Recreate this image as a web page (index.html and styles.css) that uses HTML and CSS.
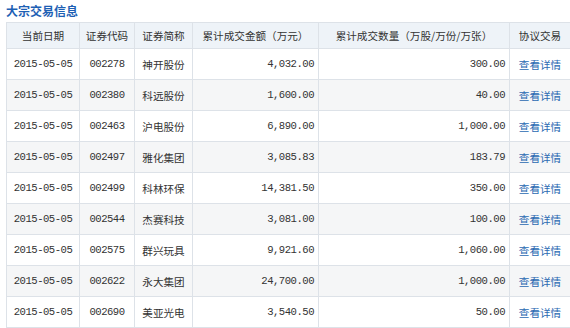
FILE: index.html
```html
<!DOCTYPE html>
<html lang="zh-CN">
<head>
<meta charset="utf-8">
<title>大宗交易信息</title>
<link rel="stylesheet" href="styles.css">
</head>
<body>
<div class="panel">
  <h2 class="title">大宗交易信息</h2>
  <table class="grid">
    <colgroup>
      <col class="c-date"><col class="c-code"><col class="c-name"><col class="c-amt"><col class="c-vol"><col class="c-act">
    </colgroup>
    <thead>
      <tr><th>当前日期</th><th>证券代码</th><th>证券简称</th><th>累计成交金额（万元）</th><th>累计成交数量（万股/万份/万张）</th><th>协议交易</th></tr>
    </thead>
    <tbody>
      <tr><td class="num c">2015-05-05</td><td class="num c">002278</td><td class="c">神开股份</td><td class="num r">4,032.00</td><td class="num r">300.00</td><td class="c"><a href="#">查看详情</a></td></tr>
      <tr><td class="num c">2015-05-05</td><td class="num c">002380</td><td class="c">科远股份</td><td class="num r">1,600.00</td><td class="num r">40.00</td><td class="c"><a href="#">查看详情</a></td></tr>
      <tr><td class="num c">2015-05-05</td><td class="num c">002463</td><td class="c">沪电股份</td><td class="num r">6,890.00</td><td class="num r">1,000.00</td><td class="c"><a href="#">查看详情</a></td></tr>
      <tr><td class="num c">2015-05-05</td><td class="num c">002497</td><td class="c">雅化集团</td><td class="num r">3,085.83</td><td class="num r">183.79</td><td class="c"><a href="#">查看详情</a></td></tr>
      <tr><td class="num c">2015-05-05</td><td class="num c">002499</td><td class="c">科林环保</td><td class="num r">14,381.50</td><td class="num r">350.00</td><td class="c"><a href="#">查看详情</a></td></tr>
      <tr><td class="num c">2015-05-05</td><td class="num c">002544</td><td class="c">杰赛科技</td><td class="num r">3,081.00</td><td class="num r">100.00</td><td class="c"><a href="#">查看详情</a></td></tr>
      <tr><td class="num c">2015-05-05</td><td class="num c">002575</td><td class="c">群兴玩具</td><td class="num r">9,921.60</td><td class="num r">1,060.00</td><td class="c"><a href="#">查看详情</a></td></tr>
      <tr><td class="num c">2015-05-05</td><td class="num c">002622</td><td class="c">永大集团</td><td class="num r">24,700.00</td><td class="num r">1,000.00</td><td class="c"><a href="#">查看详情</a></td></tr>
      <tr><td class="num c">2015-05-05</td><td class="num c">002690</td><td class="c">美亚光电</td><td class="num r">3,540.50</td><td class="num r">50.00</td><td class="c"><a href="#">查看详情</a></td></tr>
    </tbody>
  </table>
</div>
</body>
</html>
```

FILE: styles.css
```css
html, body {
  margin: 0;
  padding: 0;
  background: #ffffff;
}
body {
  font-family: "Noto Sans CJK SC", "Noto Sans", sans-serif;
  color: #333333;
  overflow: hidden;
}
.panel {
  padding-left: 6px;
}
.title {
  margin: 0;
  height: 22px;
  line-height: 22px;
  font-size: 12px;
  font-weight: bold;
  color: #1d60b4;
}
.grid {
  border-collapse: collapse;
  table-layout: fixed;
  width: 564px;
}
.c-date { width: 73px; }
.c-code { width: 55px; }
.c-name { width: 58px; }
.c-amt { width: 126px; }
.c-vol { width: 191px; }
.c-act { width: 61px; }
.grid th, .grid td {
  border: 1px solid #dde2e8;
  padding: 0 5px;
  white-space: nowrap;
  overflow: hidden;
}
.grid th {
  height: 25px;
  background: #eef3f8;
  font-weight: normal;
  font-size: 10.6px;
  color: #333333;
  text-align: center;
}
.grid td {
  height: 30px;
  font-size: 10.6px;
  color: #333333;
}
.grid tbody tr:nth-child(even) td {
  background: #f5f6f7;
}
.c { text-align: center; }
.r { text-align: right; }
.num {
  font-family: "Liberation Mono", "DejaVu Sans Mono", monospace;
  font-size: 9.6px;
  letter-spacing: -0.5px;
  color: #3a3a3a;
}
.r.num { padding-right: 4px; }
.grid a {
  color: #2a69b2;
  text-decoration: none;
  font-size: 10.6px;
}
```
